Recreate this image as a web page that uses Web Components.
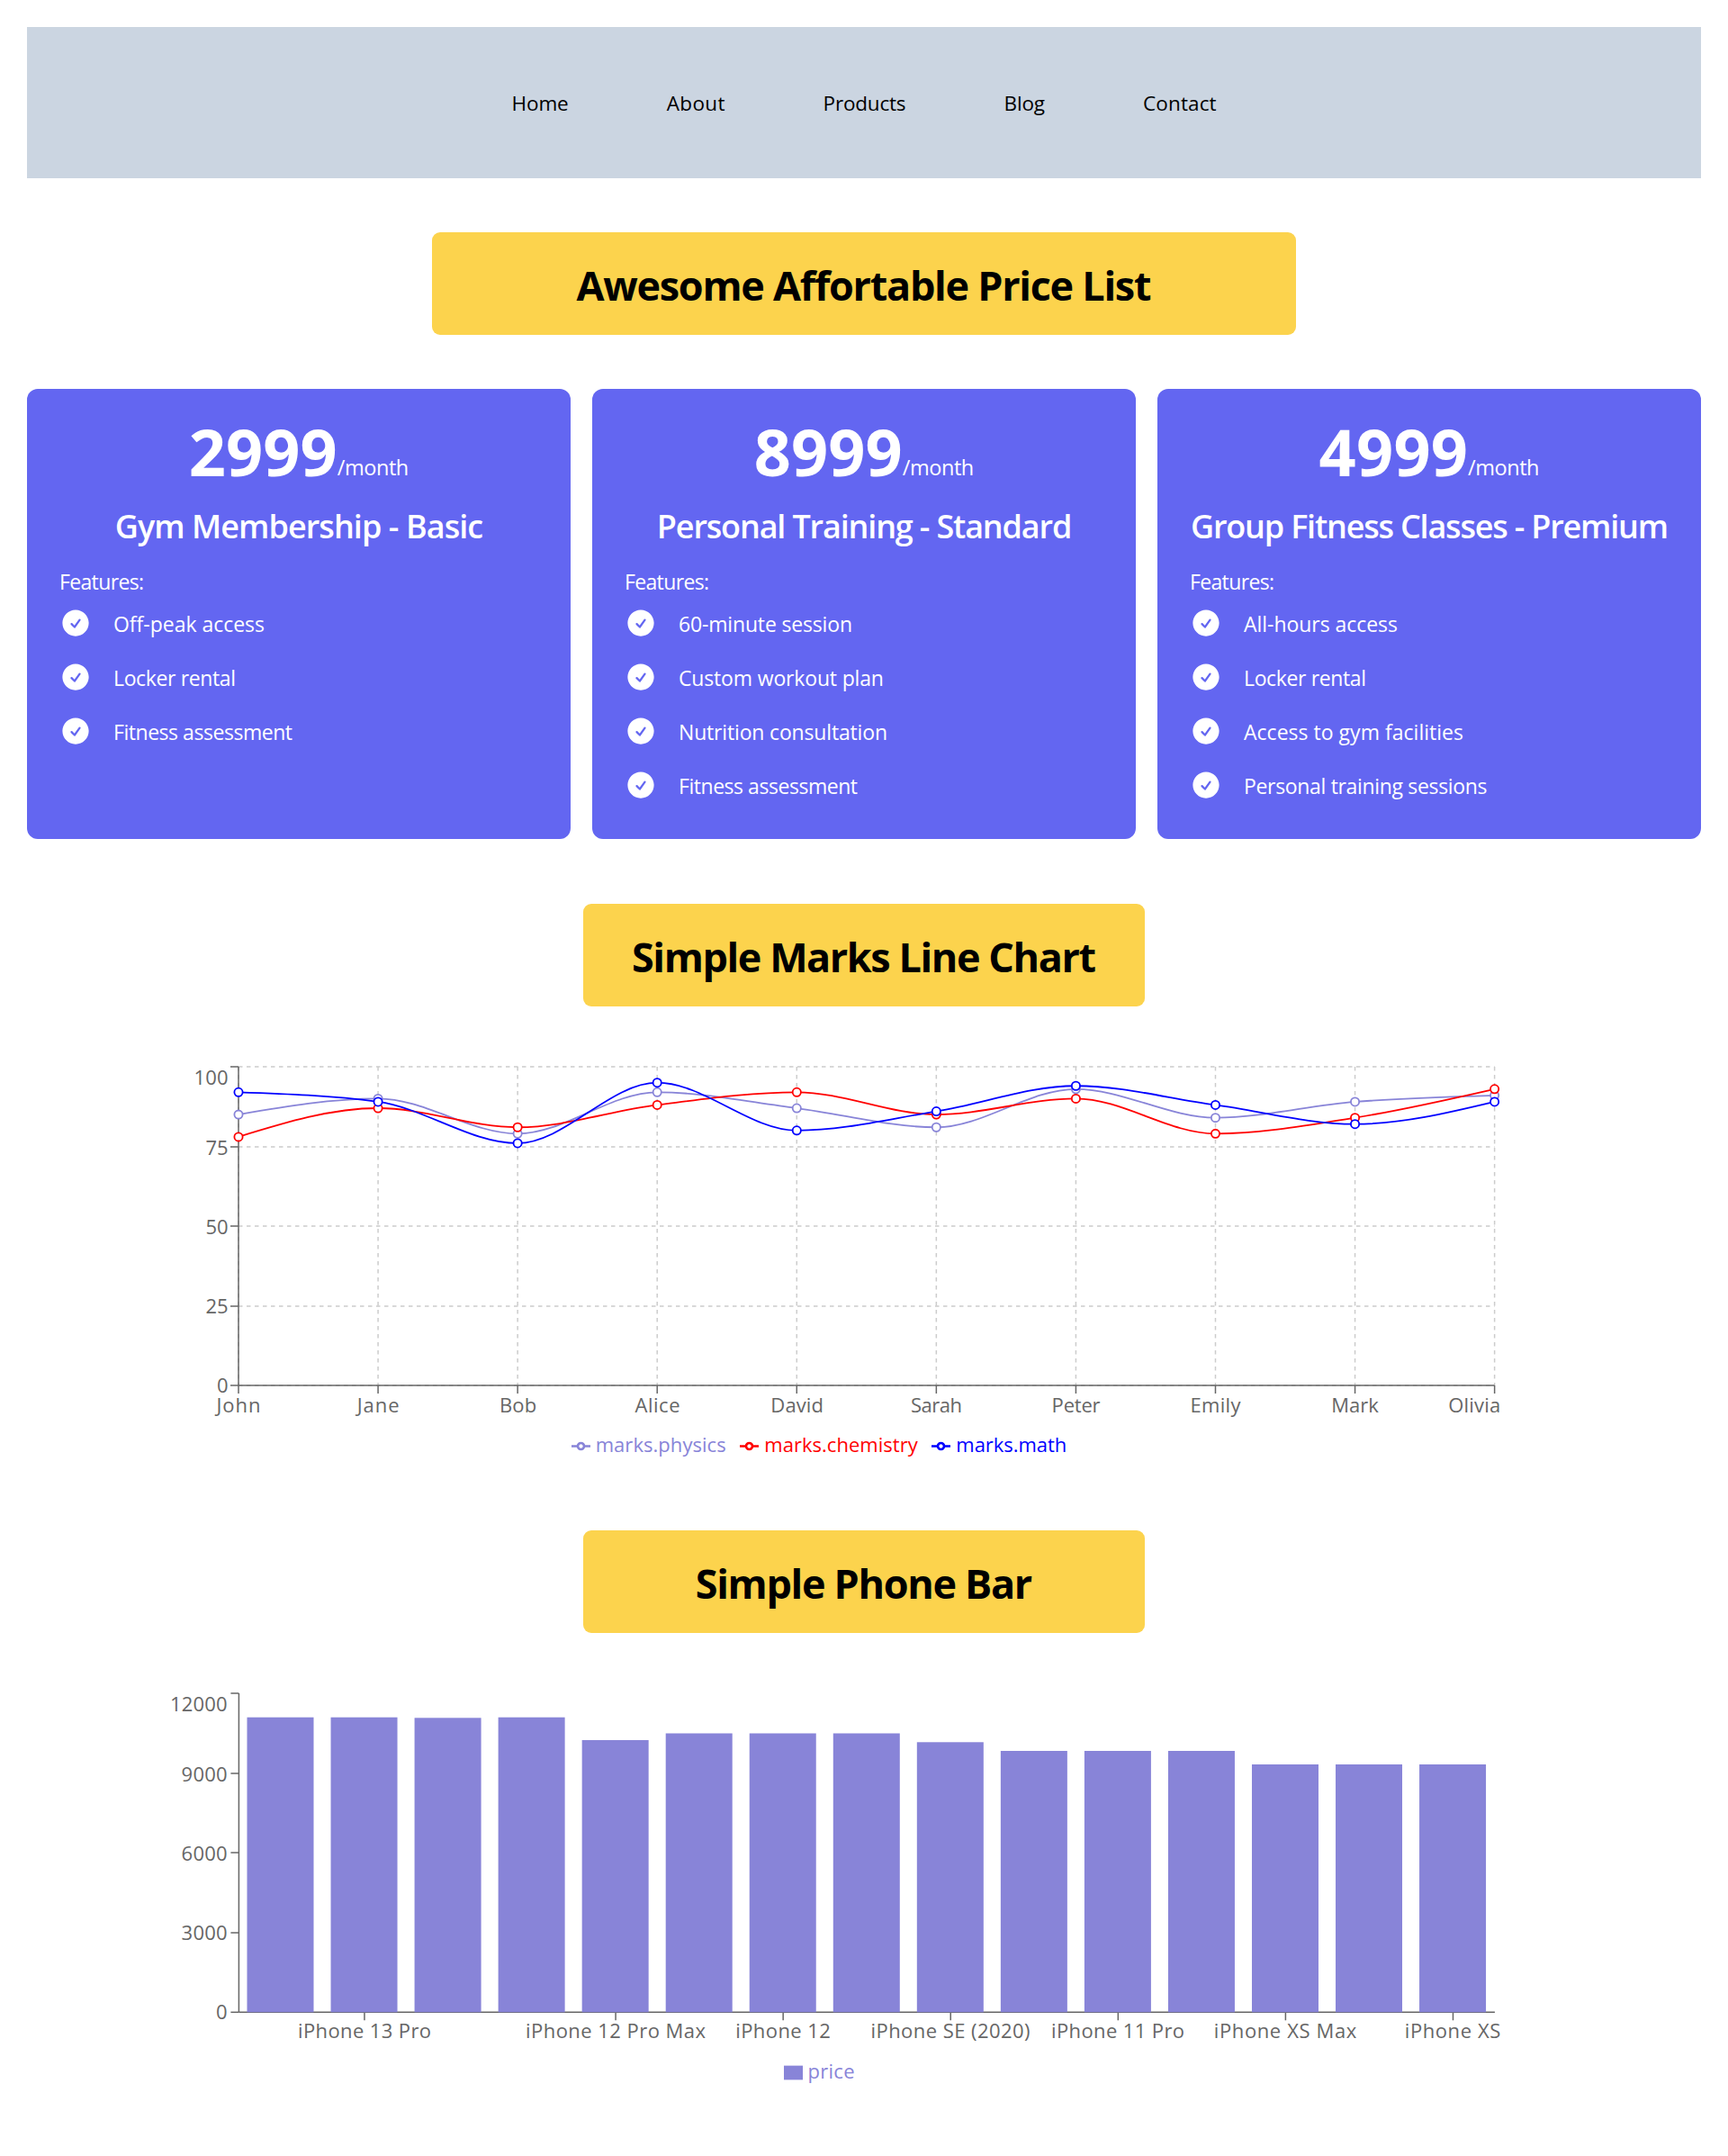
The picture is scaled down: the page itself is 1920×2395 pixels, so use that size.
<!DOCTYPE html>
<html lang="en">
<head>
<meta charset="utf-8">
<title>Price List</title>
<style>
  html, body { margin: 0; padding: 0; background: #fff; }
  body { font-family: "Open Sans", "Noto Sans", sans-serif; color: #000; padding: 30px 30px 0; height: 2365px; box-sizing: border-box; overflow: hidden; }
  .mt60 { margin-top: 60px; }
  .mt72 { margin-top: 72px; }
  .mt80 { margin-top: 80px; }
  .pricing { display: grid; grid-template-columns: repeat(3, 1fr); gap: 24px; margin-top: 60px; }
</style>
</head>
<body>
  <site-nav>
    <fit-text w="63.3">Home</fit-text>
    <fit-text w="64.8">About</fit-text>
    <fit-text w="92">Products</fit-text>
    <fit-text w="45.5">Blog</fit-text>
    <fit-text w="81.5">Contact</fit-text>
  </site-nav>

  <section-title class="mt60" width="960" w="639">Awesome Affortable Price List</section-title>

  <div class="pricing">
    <price-card price="2999" price-w="165" heading="Gym Membership - Basic" heading-w="409.5">
      <feature-item w="168">Off-peak access</feature-item>
      <feature-item w="136">Locker rental</feature-item>
      <feature-item w="199">Fitness assessment</feature-item>
    </price-card>
    <price-card price="8999" price-w="165" heading="Personal Training - Standard" heading-w="461.5">
      <feature-item w="193">60-minute session</feature-item>
      <feature-item w="228">Custom workout plan</feature-item>
      <feature-item w="232">Nutrition consultation</feature-item>
      <feature-item w="199">Fitness assessment</feature-item>
    </price-card>
    <price-card price="4999" price-w="165.5" heading="Group Fitness Classes - Premium" heading-w="531">
      <feature-item w="171">All-hours access</feature-item>
      <feature-item w="136">Locker rental</feature-item>
      <feature-item w="244">Access to gym facilities</feature-item>
      <feature-item w="270.5">Personal training sessions</feature-item>
    </price-card>
  </div>

  <section-title class="mt72" width="624" w="516">Simple Marks Line Chart</section-title>
  <div class="mt60"><line-chart></line-chart></div>

  <section-title class="mt80" width="624" w="374.5">Simple Phone Bar</section-title>
  <div class="mt60"><bar-chart></bar-chart></div>

<script>
const CHECK = 'M2.25 12c0-5.385 4.365-9.75 9.75-9.75s9.75 4.365 9.75 9.75-4.365 9.75-9.75 9.75S2.25 17.385 2.25 12zm13.36-1.814a.75.75 0 10-1.22-.872l-3.236 4.53L9.53 12.22a.75.75 0 00-1.06 1.06l2.25 2.25a.75.75 0 001.14-.094l3.75-5.25z';

/* Text run that keeps the width it has in the reference. Defined last, so the styles of its hosts apply when it measures. */
class FitText extends HTMLElement {
  connectedCallback() {
    if (!this.shadowRoot) {
      this.attachShadow({ mode: 'open' }).innerHTML =
        '<style>:host{display:inline-block;white-space:nowrap;font-variant-ligatures:none}span{display:inline-block}</style><span><slot></slot></span>';
    }
    const w = parseFloat(this.getAttribute('w'));
    if (!w) return;
    this.style.letterSpacing = '0px';
    const measured = this.shadowRoot.querySelector('span').getBoundingClientRect().width;
    const n = Math.max(1, this.textContent.trim().length - 1);
    this.style.letterSpacing = ((w - measured) / n).toFixed(3) + 'px';
    this.style.width = w + 'px';
  }
}

class SiteNav extends HTMLElement {
  constructor() {
    super();
    this.attachShadow({ mode: 'open' }).innerHTML = `<style>
      :host { display: block; height: 168px; box-sizing: border-box; background: #cbd5e1; padding-top: 66.5px; font-size: 22.5px; line-height: 36px; color: #000; }
      nav { display: flex; justify-content: center; gap: 109px; }
    </style><nav><slot></slot></nav>`;
  }
}
customElements.define('site-nav', SiteNav);

class SectionTitle extends HTMLElement {
  connectedCallback() {
    if (this.shadowRoot) return;
    const w = this.getAttribute('w');
    const text = this.textContent.trim();
    this.textContent = '';
    this.attachShadow({ mode: 'open' }).innerHTML = `<style>
      :host { display: block; box-sizing: border-box; width: ${this.getAttribute('width')}px; height: 114px; margin-left: auto; margin-right: auto;
        background: #fcd34d; border-radius: 9px; font-size: 45px; font-weight: 700; line-height: 60px; color: #000; }
      h2 { margin: 0; font: inherit; height: 100%; padding-top: 3px; box-sizing: border-box; display: flex; align-items: center; justify-content: center; }
    </style><h2><fit-text w="${w}">${text}</fit-text></h2>`;
  }
}
customElements.define('section-title', SectionTitle);

class FeatureItem extends HTMLElement {
  connectedCallback() {
    if (this.shadowRoot) return;
    const text = this.textContent.trim();
    this.textContent = '';
    this.attachShadow({ mode: 'open' }).innerHTML = `<style>
      :host { display: flex; align-items: center; gap: 24px; height: 36px; font-size: 23px; line-height: 36px; }
      svg { width: 36px; height: 36px; flex: none; fill: #fff; display: block; }
      fit-text { margin-top: 2px; }
    </style>
    <svg viewBox="0 0 24 24" aria-hidden="true"><path fill-rule="evenodd" clip-rule="evenodd" d="${CHECK}"/></svg>
    <fit-text w="${this.getAttribute('w')}">${text}</fit-text>`;
  }
}
customElements.define('feature-item', FeatureItem);

class PriceCard extends HTMLElement {
  connectedCallback() {
    if (this.shadowRoot) return;
    const a = n => this.getAttribute(n);
    this.attachShadow({ mode: 'open' }).innerHTML = `<style>
      :host { display: block; box-sizing: border-box; height: 500px; padding: 36px; background: #6366f1; border-radius: 12px; color: #fff; }
      .price { display: flex; justify-content: center; align-items: baseline; gap: 0; height: 66px; line-height: 66px; font-size: 72px; font-weight: 700; }
      .per { font-size: 23.5px; font-weight: 400; line-height: 36px; position: relative; top: -1px; }
      h3 { margin: 23.5px 0 0; text-align: center; font-size: 36px; font-weight: 600; line-height: 54px; }
      .label { margin-top: 16px; font-size: 23px; line-height: 36px; }
      .list { margin-top: 10.5px; display: flex; flex-direction: column; gap: 24px; }
    </style>
    <div class="price"><fit-text w="${a('price-w')}">${a('price')}</fit-text><span class="per"><fit-text w="79.5">/month</fit-text></span></div>
    <h3><fit-text w="${a('heading-w')}">${a('heading')}</fit-text></h3>
    <div class="label"><fit-text w="94">Features:</fit-text></div>
    <div class="list"><slot></slot></div>`;
  }
}
customElements.define('price-card', PriceCard);

class ChartLegend extends HTMLElement {
  set items(list) {
    const icon = it => it.kind === 'rect'
      ? `<svg width="21" height="21" viewBox="0 0 32 32" style="margin-top:5px"><path d="M0,4h32v24h-32z" fill="${it.color}"/></svg>`
      : `<svg width="21" height="21" viewBox="0 0 32 32" style="margin-top:4px"><path fill="none" stroke="${it.color}" stroke-width="4" d="M0,16h10.67A5.33,5.33,0,1,1,21.33,16H32M21.33,16A5.33,5.33,0,1,1,10.67,16"/></svg>`;
    this.shadowRoot.querySelector('ul').innerHTML = list.map(it =>
      `<li style="color:${it.color}">${icon(it)}<fit-text w="${it.w}">${it.label}</fit-text></li>`).join('');
  }
  constructor() {
    super();
    this.attachShadow({ mode: 'open' }).innerHTML = `<style>
      :host { display: block; font-size: 22px; line-height: 32px; }
      ul { list-style: none; margin: 0; padding: 0; display: flex; justify-content: center; gap: 15.6px; }
      li { display: flex; align-items: center; gap: 6px; height: 32px; }
      svg { display: block; flex: none; }
    </style><ul></ul>`;
  }
}
customElements.define('chart-legend', ChartLegend);

const BASE = `<style>
  :host { display: block; width: 1560px; margin-left: 100px; }
  svg.plot { display: block; overflow: visible; font-size: 22px; font-variant-ligatures: none; }
  text { fill: #666; }
</style>`;
const label = (x, y, anchor, w, t) =>
  `<text x="${x}" y="${y}" text-anchor="${anchor}" textLength="${w}" lengthAdjust="spacing">${t}</text>`;

function monotone(pts) {
  const n = pts.length, sl = [], tg = [];
  for (let i = 0; i < n - 1; i++) sl[i] = (pts[i + 1][1] - pts[i][1]) / (pts[i + 1][0] - pts[i][0]);
  const sign = v => v < 0 ? -1 : 1;
  for (let i = 1; i < n - 1; i++) {
    const h0 = pts[i][0] - pts[i - 1][0], h1 = pts[i + 1][0] - pts[i][0];
    const p = (sl[i - 1] * h1 + sl[i] * h0) / (h0 + h1);
    tg[i] = (sign(sl[i - 1]) + sign(sl[i])) * Math.min(Math.abs(sl[i - 1]), Math.abs(sl[i]), 0.5 * Math.abs(p)) || 0;
  }
  tg[0] = (3 * sl[0] - tg[1]) / 2;
  tg[n - 1] = (3 * sl[n - 2] - tg[n - 2]) / 2;
  let d = `M${pts[0][0]},${pts[0][1]}`;
  for (let i = 0; i < n - 1; i++) {
    const dx = (pts[i + 1][0] - pts[i][0]) / 3;
    d += `C${pts[i][0] + dx},${pts[i][1] + dx * tg[i]} ${pts[i + 1][0] - dx},${pts[i + 1][1] - dx * tg[i + 1]} ${pts[i + 1][0]},${pts[i + 1][1]}`;
  }
  return d;
}

class LineChart extends HTMLElement {
  connectedCallback() {
    if (this.shadowRoot) return;
    const X0 = 265, DX = 155.07, Y0 = 1539, K = 3.54, TOP = 1185;
    const xs = Array.from({ length: 10 }, (_, i) => +(X0 + i * DX).toFixed(2));
    const yv = v => +(Y0 - v * K).toFixed(2);
    const series = [
      { color: '#8884d8', label: 'marks.physics', w: 145, d: [85, 90, 79, 92, 87, 81, 93, 84, 89, 91] },
      { color: '#ff0000', label: 'marks.chemistry', w: 170.5, d: [78, 87, 81, 88, 92, 85, 90, 79, 84, 93] },
      { color: '#0000ff', label: 'marks.math', w: 123, d: [92, 89, 76, 95, 80, 86, 94, 88, 82, 89] }
    ];
    const xl = [['John', 265, 49], ['Jane', 420.2, 47], ['Bob', 575.6, 41], ['Alice', 730.5, 50], ['David', 885.6, 58.5],
                ['Sarah', 1040.4, 57], ['Peter', 1195.6, 54], ['Emily', 1350.5, 56], ['Mark', 1505.5, 52.5], ['Olivia', 1638.3, 58]];
    const yt = [[100, 1185, 1205, 38], [75, 1274, 1283.3, 25], [50, 1362, 1370.7, 25], [25, 1451, 1459.3, 25], [0, 1539, 1546.7, 12]];
    let s = `<g fill="none" stroke="#ccc" stroke-width="1.5" stroke-dasharray="4.5 4.5">`;
    yt.forEach(t => s += `<line x1="${X0}" x2="${xs[9]}" y1="${t[1]}" y2="${t[1]}"/>`);
    xs.forEach(x => s += `<line x1="${x}" x2="${x}" y1="${TOP}" y2="${Y0}"/>`);
    s += `</g><g fill="none" stroke="#666" stroke-width="1.5">`;
    s += `<line x1="${X0}" x2="${xs[9]}" y1="${Y0}" y2="${Y0}"/><line x1="${X0}" x2="${X0}" y1="${TOP}" y2="${Y0}"/>`;
    xs.forEach(x => s += `<line x1="${x}" x2="${x}" y1="${Y0}" y2="${Y0 + 9}"/>`);
    yt.forEach(t => s += `<line x1="${X0 - 9}" x2="${X0}" y1="${t[1]}" y2="${t[1]}"/>`);
    s += `</g>`;
    yt.forEach(t => s += label(253.6, t[2], 'end', t[3], t[0]));
    xl.forEach(t => s += label(t[1], 1569, 'middle', t[2], t[0]));
    series.forEach(sr => {
      const pts = sr.d.map((v, i) => [xs[i], yv(v)]);
      s += `<path d="${monotone(pts)}" fill="none" stroke="${sr.color}" stroke-width="1.8"/>`;
      pts.forEach(p => s += `<circle cx="${p[0]}" cy="${p[1]}" r="4.6" fill="#fff" stroke="${sr.color}" stroke-width="1.8"/>`);
    });
    this.attachShadow({ mode: 'open' }).innerHTML = BASE +
      `<svg class="plot" width="1560" height="410" viewBox="130 1178 1560 410">${s}</svg><chart-legend></chart-legend>`;
    this.shadowRoot.querySelector('chart-legend').items = series;
  }
}
customElements.define('line-chart', LineChart);

class BarChart extends HTMLElement {
  connectedCallback() {
    if (this.shadowRoot) return;
    const X0 = 265.4, DX = 93.04, Y0 = 2235.3, TOP = 1881, XE = 1660.9;
    const tops = [1907.7, 1907.7, 1908.3, 1907.7, 1933, 1925.5, 1925.5, 1925.5, 1935.3, 1945, 1945, 1945, 1960, 1960, 1960];
    const yt = [[12000, 1881, 1900.7, 63.5], [9000, 1970, 1978.7, 51], [6000, 2058, 2066.7, 51], [3000, 2147, 2155.3, 51], [0, 2235.3, 2243.3, 12]];
    const xl = [['iPhone 13 Pro', 405, 148, 1], ['iPhone 12 Pro Max', 684, 200, 4], ['iPhone 12', 870, 105.5, 6], ['iPhone SE (2020)', 1056, 177, 8],
                ['iPhone 11 Pro', 1242, 148, 10], ['iPhone XS Max', 1428, 158.5, 12], ['iPhone XS', 1614, 106.5, 14]];
    let s = `<g fill="none" stroke="#666" stroke-width="1.5">`;
    s += `<line x1="${X0}" x2="${XE}" y1="${Y0}" y2="${Y0}"/><line x1="${X0}" x2="${X0}" y1="${TOP}" y2="${Y0}"/>`;
    yt.forEach(t => s += `<line x1="${X0 - 9}" x2="${X0}" y1="${t[1]}" y2="${t[1]}"/>`);
    xl.forEach(t => { const x = +(X0 + (t[3] + .5) * DX).toFixed(2); s += `<line x1="${x}" x2="${x}" y1="${Y0}" y2="${Y0 + 9}"/>`; });
    s += `</g>`;
    yt.forEach(t => s += label(252.6, t[2], 'end', t[3], t[0]));
    xl.forEach(t => s += label(t[1], 2264.3, 'middle', t[2], t[0]));
    s += `<g fill="#8884d8">`;
    tops.forEach((y, i) => s += `<rect x="${(X0 + i * DX + 9.1).toFixed(2)}" y="${y}" width="74" height="${(Y0 - y).toFixed(2)}"/>`);
    s += `</g>`;
    this.attachShadow({ mode: 'open' }).innerHTML = BASE +
      `<svg class="plot" width="1560" height="409.5" viewBox="130 1874 1560 409.5">${s}</svg><chart-legend></chart-legend>`;
    this.shadowRoot.querySelector('chart-legend').items = [{ kind: 'rect', color: '#8884d8', label: 'price', w: 52 }];
  }
}
customElements.define('bar-chart', BarChart);

customElements.define('fit-text', FitText);
</script>
</body>
</html>
